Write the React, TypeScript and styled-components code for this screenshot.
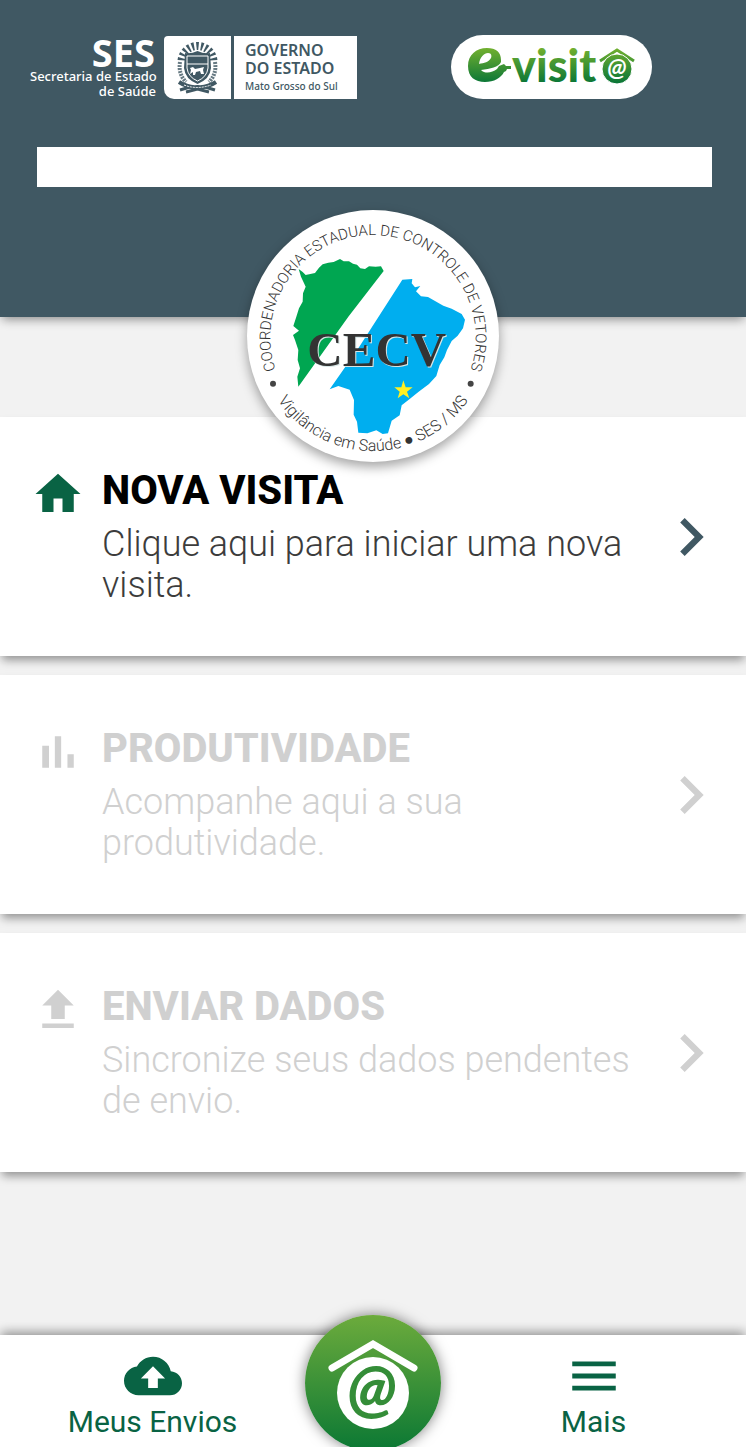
import React from "react";
import styled, { createGlobalStyle } from "styled-components";

const GlobalStyle = createGlobalStyle`
  *, *::before, *::after { box-sizing: border-box; }
  body { margin: 0; background: #f2f2f2; font-family: Roboto, sans-serif; }
  button { font: inherit; color: inherit; border: 0; background: none; padding: 0; margin: 0; cursor: pointer; }
  h2, p { margin: 0; }
`;

const Page = styled.div`
  min-height: 100vh;
  display: flex;
  flex-direction: column;
  overflow: hidden;
`;

const Header = styled.header`
  position: relative;
  height: 317px;
  padding: 35px 34px 0 30px;
  background: #405863;
  box-shadow: 0 4px 10px -2px rgba(0, 0, 0, 0.45);
`;

const Brands = styled.div`
  display: flex;
  align-items: center;
  height: 64px;
`;

const Secretariat = styled.div`
  width: 126px;
  color: #fff;
  font-family: "Noto Sans", sans-serif;
  font-size: 13px;
  font-weight: 500;
  line-height: 15px;
  text-align: right;
  white-space: nowrap;
`;

const Acronym = styled.div`
  padding-right: 1px;
  font-family: "Open Sans", sans-serif;
  font-size: 38px;
  font-weight: 700;
  line-height: 34px;
`;

const Crest = styled.div`
  width: 67px;
  height: 63px;
  margin: 0 3px 0 8px;
  background: #fff;
  border-radius: 4px 0 0 10px;
`;

const Government = styled.div`
  width: 123px;
  height: 63px;
  padding: 5px 0 0 11px;
  background: #fff;
  color: #405863;
  font-family: "Noto Sans", sans-serif;
  font-size: 16px;
  font-weight: 600;
  line-height: 18px;
  white-space: nowrap;
`;

const StateName = styled.div`
  font-size: 10px;
  font-weight: 500;
`;

const ProductLogo = styled.div`
  width: 201px;
  height: 64px;
  margin-left: 94px;
  border-radius: 32px;
  background: #fff;
`;

const SearchField = styled.input`
  display: block;
  width: calc(100% - 7px);
  height: 40px;
  margin: 48px 0 0 7px;
  padding: 0 12px;
  border: 0;
  border-radius: 0;
  background: #fff;
  font: 20px Roboto, sans-serif;
`;

const Emblem = styled.div`
  position: absolute;
  z-index: 2;
  left: calc(50% - 126px);
  top: 210px;
  width: 252px;
  height: 252px;
  border-radius: 50%;
  background: #fff;
  box-shadow: 0 5px 12px rgba(0, 0, 0, 0.36);
`;

const Drawing = styled.svg`
  display: block;
  width: 100%;
  height: 100%;
`;

const EmblemInitials = styled.text`
  fill: #333;
  font-family: "Liberation Serif", serif;
  font-size: 147px;
  font-weight: 700;
  text-shadow: 1px 1px 0 #d7e6e6;
`;

const Actions = styled.main`
  flex: 1;
  display: flex;
  flex-direction: column;
  gap: 19px;
  padding: 100px 0;
`;

const ActionCard = styled.button`
  display: flex;
  width: 100%;
  min-height: 239px;
  padding: 50px 17px 50px 31px;
  background: #fff;
  color: #3c3c3c;
  text-align: left;
  box-shadow: 0 6px 9px -2px rgba(0, 0, 0, 0.4);

  &:disabled { color: #d0d0d0; cursor: default; }
`;

const ActionIcon = styled.svg`
  flex: none;
  width: 54px;
  height: 54px;
  margin-right: 17px;
  fill: #096344;

  ${ActionCard}:disabled & { fill: #d0d0d0; }
`;

const ActionText = styled.div`
  flex: 1;
  font-size: 36px;
  font-weight: 340;
  line-height: 41px;
`;

const ActionTitle = styled.h2`
  margin-bottom: 9px;
  color: #000;
  font-size: 40px;
  font-weight: 800;
  line-height: 48px;

  ${ActionCard}:disabled & { color: #d0d0d0; }
`;

const Chevron = styled.svg`
  flex: none;
  align-self: center;
  width: 76px;
  height: 76px;
  fill: #405863;

  ${ActionCard}:disabled & { fill: #d0d0d0; }
`;

const BottomNav = styled.nav`
  display: grid;
  grid-template-columns: 1fr 136px 1fr;
  height: 112px;
  background: #fff;
  box-shadow: 0 -4px 10px -1px rgba(0, 0, 0, 0.4);
`;

const NavItem = styled.button`
  display: flex;
  flex-direction: column;
  align-items: center;
  padding-top: 12px;
  color: #096344;
  font-size: 30px;
  line-height: 34px;

  svg { display: block; width: 58px; height: 58px; fill: currentColor; }
`;

const HomeButton = styled.button`
  width: 136px;
  height: 136px;
  margin-top: -20px;
  border-radius: 50%;
  background: linear-gradient(#6cab3c, #0b7834);
  box-shadow: 0 0 14px rgba(0, 0, 0, 0.5);
`;

const rays = [-80, -64, -48, -32, -16, 0, 16, 32, 48, 64, 80];

function CrestDrawing() {
  return (
    <Drawing viewBox="0 0 67 63" role="img" aria-label="Brasão de Mato Grosso do Sul">
      <g fill="#405863">
        {rays.map((a) => (
          <path key={a} d="M32.800 14 L32 6 L35 6 L34.200 14Z" transform={`rotate(${a} 33.500 26)`} />
        ))}
        <path d="M21 17 Q27 18 33.500 15 Q40 18 46 17 L47 32 Q46 43 33.500 48 Q21 43 20 32Z" />
      </g>
      <path d="M23 20 H44 V32 Q43 41 33.500 45 Q24 41 23 32Z" fill="none" stroke="#fff" strokeWidth="1" />
      <path d="M23 28 H44" stroke="#fff" strokeWidth="1" />
      <path d="M26 38 L27 34 L26 32 L29 31 L31 33 L36 32 L40 31 L39 34 L40 38 L37 38 L36 35 L32 36 L31 39 L29 39 L29 36Z" fill="#fff" />
      <g fill="none" stroke="#405863" strokeWidth="4" strokeDasharray="2 1" opacity="0.8">
        <path d="M16 26 Q14 38 22 46" />
        <path d="M51 26 Q53 38 45 46" />
      </g>
      <g fill="none" stroke="#405863">
        <path d="M15 46 Q24 52 33.500 51 Q43 52 52 46" strokeWidth="4" />
        <path d="M16 54 L26 51 M51 54 L41 51 M22 56 L33.500 53 L45 56" strokeWidth="3" />
      </g>
      <path d="M20 49 Q33 54 47 49" fill="none" stroke="#fff" strokeWidth="1" strokeDasharray="2 1" />
    </Drawing>
  );
}

function ProductDrawing() {
  return (
    <Drawing viewBox="0 0 201 64" role="img" aria-label="e-visit@">
      <defs>
        <linearGradient id="leaf" gradientUnits="userSpaceOnUse" x1="0" y1="13" x2="0" y2="48">
          <stop offset="0" stopColor="#72b02f" />
          <stop offset="1" stopColor="#0a7637" />
        </linearGradient>
      </defs>
      <path
        fill="url(#leaf)"
        fillRule="evenodd"
        d="M50 25 C50 17 45 13 36 13 C25 13 17 20 17 31 C17 42 24 47 34 47 C43 47 50 43 53 37 L55 36 L56 34 L60 34 L60 31 L55 31 L53 29 L48 31 L46 34 C41 38 34 39 30 35 C39 34 48 32 50 27Z M28 29 C29 22 33 18 37 18 C40 18 41 20 40 23 C38 27 33 28 28 29Z"
      />
      <text x="61" y="47" fontFamily="Lato, sans-serif" fontWeight="900" fontSize="45" fill="url(#leaf)">visit</text>
      <path d="M149 26 L166 15 L183 26" fill="none" stroke="url(#leaf)" strokeWidth="3" />
      <circle cx="166" cy="34" r="15" fill="url(#leaf)" stroke="#fff" strokeWidth="1" />
      <text x="166" y="41" textAnchor="middle" fontFamily="Lato, sans-serif" fontWeight="700" fontStyle="italic" fontSize="25" fill="#fff">@</text>
    </Drawing>
  );
}

function EmblemDrawing() {
  return (
    <Drawing viewBox="36 30 756 756" role="img" aria-label="CECV">
      <defs>
        <path id="upper" d="M123 514 A308 308 0 1 1 705 514" />
        <path id="lower" d="M92 530 A344 344 0 0 0 736 530" />
      </defs>
      <path
        fill="#00a651"
        d="M191 207 L203 216 L212 225 L240 219 L252 203 L263 193 L280 188 L296 186 L315 177 L326 184 L342 184 L354 191 L366 194 L376 205 L390 207 L402 199 L422 200 L438 199 L446 213 L340 350 L190 560 L187 530 L195 505 L188 480 L190 450 L180 420 L174 405 L192 392 L175 378 L184 350 L192 325 L203 305 L204 280 L212 260 L198 230Z"
      />
      <path
        fill="#00aeef"
        d="M502 239 L532 237 L530 250 L540 262 L556 258 L543 274 L558 289 L579 291 L600 303 L625 317 L650 326 L680 342 L690 359 L684 385 L668 407 L650 423 L636 450 L628 472 L614 495 L604 528 L582 552 L550 576 L525 596 L500 616 L494 646 L470 662 L459 700 L443 702 L424 691 L397 700 L370 698 L366 665 L356 644 L357 600 L344 569 L310 558 L284 568 L370 445Z"
      />
      <EmblemInitials x="217" y="498">CECV</EmblemInitials>
      <path fill="#fff022" d="M505 541 L512 562 L533 562 L516 575 L523 595 L505 583 L488 595 L494 575 L478 562 L499 562Z" />
      <g fontFamily="Roboto, sans-serif" fontWeight="300" fill="#333" textAnchor="middle">
        <text fontSize="45"><textPath href="#upper" startOffset="50%">COORDENADORIA ESTADUAL DE CONTROLE DE VETORES</textPath></text>
        <text fontSize="48"><textPath href="#lower" startOffset="50%">Vigilância em Saúde ● SES / MS</textPath></text>
      </g>
      <circle cx="114" cy="551" r="9" fill="#444" />
      <circle cx="707" cy="551" r="9" fill="#444" />
    </Drawing>
  );
}

const actions = [
  {
    title: "NOVA VISITA",
    text: "Clique aqui para iniciar uma nova visita.",
    icon: "M10 20v-6h4v6h5v-8h3L12 3 2 12h3v8z",
    enabled: true,
  },
  {
    title: "PRODUTIVIDADE",
    text: "Acompanhe aqui a sua produtividade.",
    icon: "M5 9.200h3V19H5zM10.600 5h2.800v14h-2.800zm5.600 8H19v6h-2.800z",
    enabled: false,
  },
  {
    title: "ENVIAR DADOS",
    text: "Sincronize seus dados pendentes de envio.",
    icon: "M5 20h14v-2H5v2zm0-10h4v6h6v-6h4l-7-7-7 7z",
    enabled: false,
  },
];

export default function App() {
  return (
    <Page>
      <GlobalStyle />
      <Header>
        <Brands>
          <Secretariat>
            <Acronym>SES</Acronym>
            Secretaria de Estado
            <br />
            de Saúde
          </Secretariat>
          <Crest><CrestDrawing /></Crest>
          <Government>
            GOVERNO
            <br />
            DO ESTADO
            <StateName>Mato Grosso do Sul</StateName>
          </Government>
          <ProductLogo><ProductDrawing /></ProductLogo>
        </Brands>
        <SearchField type="text" aria-label="Usuário" />
        <Emblem><EmblemDrawing /></Emblem>
      </Header>
      <Actions>
        {actions.map((action) => (
          <ActionCard key={action.title} disabled={!action.enabled}>
            <ActionIcon viewBox="0 0 24 24" aria-hidden="true"><path d={action.icon} /></ActionIcon>
            <ActionText>
              <ActionTitle>{action.title}</ActionTitle>
              <p>{action.text}</p>
            </ActionText>
            <Chevron viewBox="0 0 24 24" aria-hidden="true">
              <path d="M10 6L8.590 7.410 13.170 12l-4.580 4.590L10 18l6-6z" />
            </Chevron>
          </ActionCard>
        ))}
      </Actions>
      <BottomNav>
        <NavItem>
          <svg viewBox="0 0 24 24" aria-hidden="true">
            <path d="M19.350 10.040C18.670 6.590 15.640 4 12 4 9.110 4 6.600 5.640 5.350 8.040 2.340 8.360 0 10.910 0 14c0 3.310 2.690 6 6 6h13c2.760 0 5-2.240 5-5 0-2.640-2.050-4.780-4.650-4.960zM14 13v4h-4v-4H7l5-5 5 5h-3z" />
          </svg>
          Meus Envios
        </NavItem>
        <HomeButton aria-label="Início">
          <Drawing viewBox="0 0 136 136" aria-hidden="true">
            <path d="M27 53 L68 29 L109 53" fill="none" stroke="#fff" strokeWidth="7" strokeLinecap="round" />
            <circle cx="68" cy="78" r="36" fill="#fff" />
            <text x="67" y="96" textAnchor="middle" fontFamily="Lato, sans-serif" fontWeight="900" fontStyle="italic" fontSize="64" fill="#348d38">@</text>
          </Drawing>
        </HomeButton>
        <NavItem>
          <svg viewBox="0 0 24 24" aria-hidden="true"><path d="M3 18h18v-2H3v2zm0-5h18v-2H3v2zm0-7v2h18V6H3z" /></svg>
          Mais
        </NavItem>
      </BottomNav>
    </Page>
  );
}
